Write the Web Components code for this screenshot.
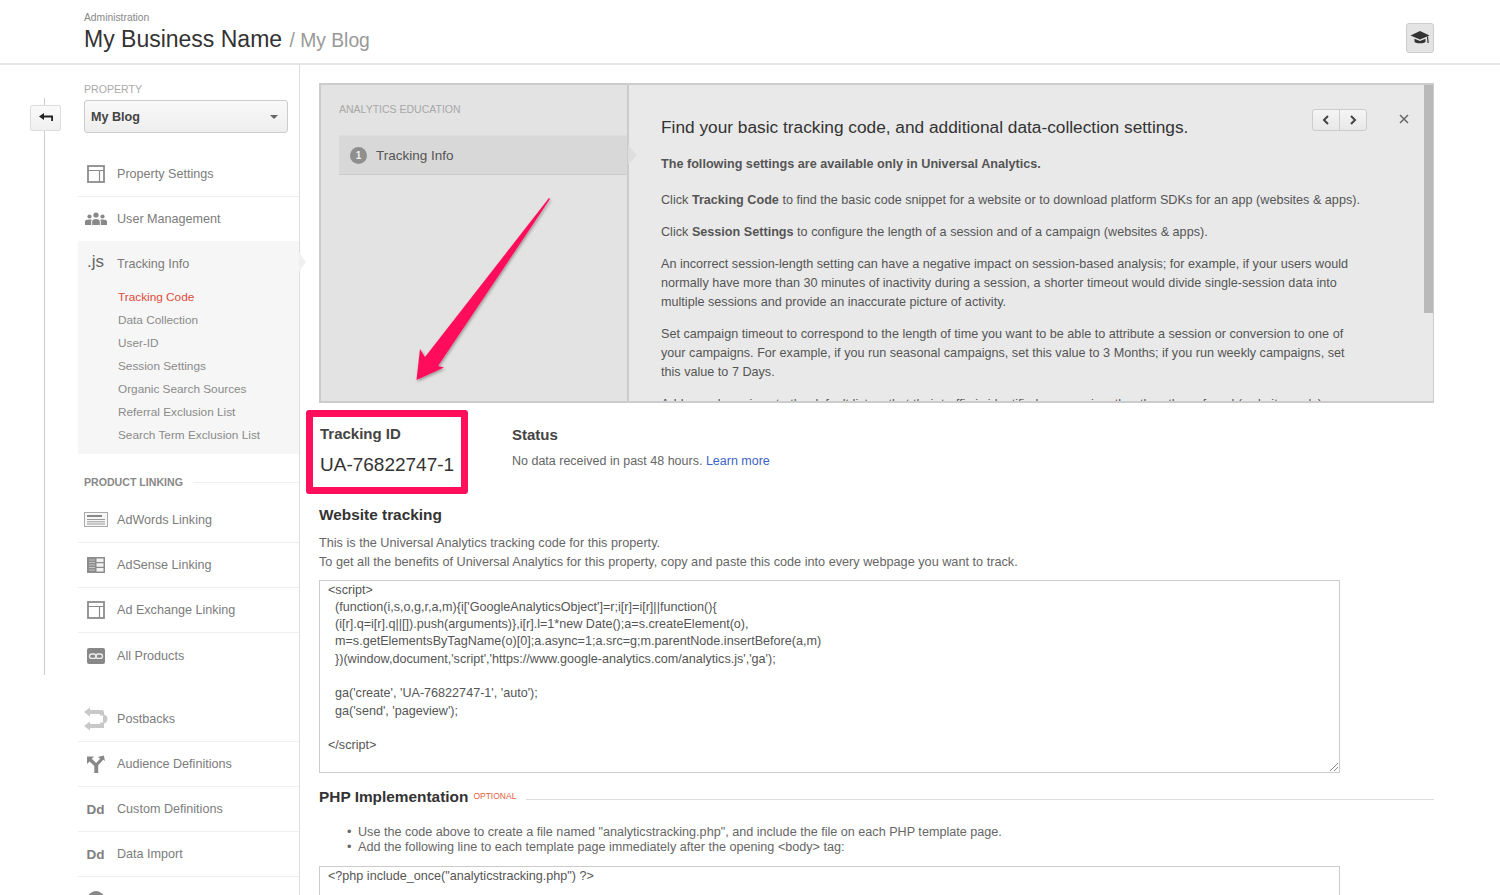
<!DOCTYPE html>
<html>
<head>
<meta charset="utf-8">
<title>Tracking Info</title>
<style>
    html, body { margin: 0; padding: 0; height: 895px; overflow: hidden; background: #fff; }
    body { font-family: "Liberation Sans", Arial, sans-serif; font-size: 12px; color: #555; }
</style>
</head>
<body>
<ga-page>
    <ga-header slot="header" crumb="Administration" account="My Business Name" view="/ My Blog"></ga-header>
    <ga-rail slot="rail"></ga-rail>
    <ga-sidebar slot="sidebar">
        <ga-nav-item icon="panel">Property Settings</ga-nav-item>
        <ga-nav-item icon="users" last style="height:44px">User Management</ga-nav-item>
        <ga-nav-group>
            <ga-nav-item icon="js" slot="head" last active>Tracking Info</ga-nav-item>
            <ga-sub-item current>Tracking Code</ga-sub-item>
            <ga-sub-item>Data Collection</ga-sub-item>
            <ga-sub-item>User-ID</ga-sub-item>
            <ga-sub-item>Session Settings</ga-sub-item>
            <ga-sub-item>Organic Search Sources</ga-sub-item>
            <ga-sub-item>Referral Exclusion List</ga-sub-item>
            <ga-sub-item>Search Term Exclusion List</ga-sub-item>
        </ga-nav-group>
        <ga-nav-label>PRODUCT LINKING</ga-nav-label>
        <ga-nav-item icon="adwords">AdWords Linking</ga-nav-item>
        <ga-nav-item icon="adsense">AdSense Linking</ga-nav-item>
        <ga-nav-item icon="panel">Ad Exchange Linking</ga-nav-item>
        <ga-nav-item icon="link" last>All Products</ga-nav-item>
        <div style="height:19px"></div>
        <ga-nav-item icon="postbacks">Postbacks</ga-nav-item>
        <ga-nav-item icon="fork">Audience Definitions</ga-nav-item>
        <ga-nav-item icon="dd">Custom Definitions</ga-nav-item>
        <ga-nav-item icon="dd">Data Import</ga-nav-item>
        <ga-nav-item icon="social" last>Social Settings</ga-nav-item>
    </ga-sidebar>
    <ga-edu-panel slot="main">
        <p class="first"><b>The following settings are available only in Universal Analytics.</b></p>
        <p>Click <b>Tracking Code</b> to find the basic code snippet for a website or to download platform SDKs for an app (websites &amp; apps).</p>
        <p>Click <b>Session Settings</b> to configure the length of a session and of a campaign (websites &amp; apps).</p>
        <p>An incorrect session-length setting can have a negative impact on session-based analysis; for example, if your users would<br>normally have more than 30 minutes of inactivity during a session, a shorter timeout would divide single-session data into<br>multiple sessions and provide an inaccurate picture of activity.</p>
        <p>Set campaign timeout to correspond to the length of time you want to be able to attribute a session or conversion to one of<br>your campaigns. For example, if you run seasonal campaigns, set this value to 3 Months; if you run weekly campaigns, set<br>this value to 7 Days.</p>
        <p>Add search engines to the default list so that their traffic is identified as organic rather than those found (websites only).</p>
    </ga-edu-panel>
    <ga-tracking-head slot="main" tracking-id="UA-76822747-1">
        No data received in past 48 hours. <a href="#">Learn more</a>
    </ga-tracking-head>
    <ga-section slot="main" heading="Website tracking">
        <div>This is the Universal Analytics tracking code for this property.</div>
        <div>To get all the benefits of Universal Analytics for this property, copy and paste this code into every webpage you want to track.</div>
        <ga-code-box height="193" gap="8" grip>&lt;script&gt;
  (function(i,s,o,g,r,a,m){i['GoogleAnalyticsObject']=r;i[r]=i[r]||function(){
  (i[r].q=i[r].q||[]).push(arguments)},i[r].l=1*new Date();a=s.createElement(o),
  m=s.getElementsByTagName(o)[0];a.async=1;a.src=g;m.parentNode.insertBefore(a,m)
  })(window,document,'script','https://www.google-analytics.com/analytics.js','ga');

  ga('create', 'UA-76822747-1', 'auto');
  ga('send', 'pageview');

&lt;/script&gt;</ga-code-box>
    </ga-section>
    <ga-php-section slot="main" heading="PHP Implementation" tag="OPTIONAL">
        <li>Use the code above to create a file named "analyticstracking.php", and include the file on each PHP template page.</li>
        <li>Add the following line to each template page immediately after the opening &lt;body&gt; tag:</li>
    </ga-php-section>
    <ga-code-box slot="main" height="60" gap="9">&lt;?php include_once("analyticstracking.php") ?&gt;</ga-code-box>
</ga-page>

<script>
const ICONS = {
    panel: `<svg width="24" height="20" viewBox="0 0 24 20"><rect x="4" y="2" width="16" height="16" fill="none" stroke="#8c8c8c" stroke-width="1.800"/><path d="M4 6.500h16M15.500 6.500V18" fill="none" stroke="#8c8c8c" stroke-width="1.200"/></svg>`,
    users: `<svg width="24" height="20" viewBox="0 0 24 20"><g fill="#888"><circle cx="12" cy="6" r="2.600"/><circle cx="5.500" cy="7.500" r="2.100"/><circle cx="18.500" cy="7.500" r="2.100"/><path d="M1 16v-3.400c0-1.300 1.200-2.200 4.500-2.200 1 0 1.800.1 2.400.4-.5.5-.7 1.100-.7 1.800V16zM23 16v-3.400c0-1.300-1.200-2.200-4.500-2.200-1 0-1.800.1-2.400.4.5.5.7 1.100.7 1.800V16zM8.200 16v-3.500c0-1.500 1.400-2.500 3.800-2.500s3.800 1 3.800 2.500V16z"/></g></svg>`,
    adwords: `<svg width="24" height="20" viewBox="0 0 24 20"><rect x=".500" y="2.500" width="23" height="14" fill="#f7f7f7" stroke="#aaa"/><path d="M3 6h15" stroke="#888" stroke-width="2"/><path d="M3 9.500h18M3 11.800h18M3 14h18" stroke="#999" stroke-width="1"/></svg>`,
    adsense: `<svg width="24" height="20" viewBox="0 0 24 20"><rect x="3" y="2" width="18" height="16" fill="#8c8c8c"/><path d="M5 5h6M5 7.500h6M5 10h6M5 12.500h6M5 15h6" stroke="#c4c4c4" stroke-width="1"/><path d="M12.500 3.500H19.500V7h-7zM12.500 8.300H19.500v3.500h-7zM12.500 13H19.500v3.500h-7z" fill="#f2f2f2"/></svg>`,
    link: `<svg width="24" height="20" viewBox="0 0 24 20"><rect x="3" y="2" width="18" height="16" rx="2" fill="#888"/><rect x="5.500" y="8" width="6.500" height="4.400" rx="2.200" fill="none" stroke="#eee" stroke-width="1.300"/><rect x="12" y="8" width="6.500" height="4.400" rx="2.200" fill="none" stroke="#eee" stroke-width="1.300"/></svg>`,
    postbacks: `<svg width="24" height="24" viewBox="0 0 24 24"><g fill="#c8c8c8"><path d="M0 5l6-4.500V3h12.500l1.500 1.500V7H6v2.500zM0 19l6-4.500V17h14v4H6v2.500z"/><path d="M19 7.500a4.500 4.500 0 0 1 0 9z"/><path d="M16 7h4v1.500h-4zM16 15.500h4V17h-4z"/></g></svg>`,
    fork: `<svg width="24" height="20" viewBox="0 0 24 20"><path d="M3 2.500h7L7.800 4.700l4.300 4.300 4-4.300L14 3l5.800-1.500L21 7l-1.800-1.300-5 5.600V19h-3.900v-6.900L5.600 7.400 3 10z" fill="#888"/></svg>`,
    social: `<svg width="24" height="20" viewBox="0 0 24 20"><circle cx="12" cy="10" r="9" fill="#888"/></svg>`
};

class GaPage extends HTMLElement {
    constructor() {
        super();
        this.attachShadow({ mode: 'open' });
        this.shadowRoot.innerHTML = `
            <style>
                :host { display: block; width: 1500px; height: 895px; overflow: hidden; position: relative; }
                .body { display: flex; height: 830px; }
                .main { width: 1115px; padding: 18px 0 0 19px; }
                .arrow { position: absolute; left: 0; top: 0; pointer-events: none; }
            </style>
            <slot name="header"></slot>
            <div class="body">
                <slot name="rail"></slot>
                <slot name="sidebar"></slot>
                <div class="main"><slot name="main"></slot></div>
            </div>
            <svg class="arrow" width="1500" height="895">
                <defs><filter id="sh" x="-20%" y="-20%" width="140%" height="140%"><feDropShadow dx="1" dy="1.500" stdDeviation="1.500" flood-color="#000" flood-opacity=".35"/></filter></defs>
                <polygon filter="url(#sh)" fill="#ff0f5c" points="549,198 550,199 438,366 444,367.500 416.500,380 420,349 425,357"/>
            </svg>`;
    }
}

class GaHeader extends HTMLElement {
    constructor() {
        super();
        this.attachShadow({ mode: 'open' });
        this.shadowRoot.innerHTML = `
            <style>
                :host { display: flex; justify-content: space-between; height: 63px; box-sizing: content-box; border-bottom: 2px solid #e6e6e6; padding-left: 84px; padding-right: 66px; }
                .crumb { font-size: 10.300px; color: #888; padding-top: 12px; line-height: 11px; }
                .title { line-height: 28px; margin-top: 2px; white-space: nowrap; }
                .account { font-size: 23px; color: #333; }
                .view { font-size: 19.300px; color: #999; margin-left: 4px; }
                .cap { width: 26px; height: 28px; margin-top: 23px; background: #e4e4e4; border: 1px solid #ccc; border-radius: 3px; display: flex; align-items: center; justify-content: center; }
            </style>
            <div>
                <div class="crumb"></div>
                <div class="title"><span class="account"></span> <span class="view"></span></div>
            </div>
            <div class="cap">
                <svg width="22" height="18" viewBox="0 0 22 18"><path d="M11 2L20.500 6.500l-9.500 4-9.500-4z" fill="#333"/><path d="M5.500 9.800v3c1.500 2 9.500 2 11 0v-3L11 12z" fill="#333"/><path d="M18.500 7.500l.6 6.500" stroke="#333" stroke-width="1.200"/></svg>
            </div>`;
        this.shadowRoot.querySelector('.crumb').textContent = this.getAttribute('crumb');
        this.shadowRoot.querySelector('.account').textContent = this.getAttribute('account');
        this.shadowRoot.querySelector('.view').textContent = this.getAttribute('view');
    }
}

class GaRail extends HTMLElement {
    constructor() {
        super();
        this.attachShadow({ mode: 'open' });
        this.shadowRoot.innerHTML = `
            <style>
                :host { display: flex; flex-direction: column; width: 78px; flex: none; padding-top: 33px; box-sizing: border-box; height: 610px; }
                .line { width: 1px; background: #ccc; margin-left: 44px; }
                .back { width: 29px; height: 24px; margin-left: 30px; border: 1px solid #ddd; border-radius: 2px; background: linear-gradient(#fafafa, #f0f0f0); display: flex; align-items: center; justify-content: center; box-sizing: content-box; }
            </style>
            <div class="line" style="height:7px"></div>
            <div class="back"><svg width="16" height="12" viewBox="0 0 16 12"><path d="M1 4.500L6 1v2.500h9V9h-1.800V5.500H6V8z" fill="#222"/></svg></div>
            <div class="line" style="flex:1"></div>`;
    }
}

class GaSidebar extends HTMLElement {
    constructor() {
        super();
        this.attachShadow({ mode: 'open' });
        this.shadowRoot.innerHTML = `
            <style>
                :host { display: block; width: 222px; flex: none; box-sizing: border-box; border-right: 1px solid #ddd; height: 830px; font-size: 12.600px; }
                .top { padding: 18px 0 19px 6px; }
                .label { font-size: 10.600px; color: #aaa; line-height: 13px; margin-bottom: 4px; }
                .select { width: 187px; height: 31px; border: 1px solid #ccc; border-radius: 3px; background: linear-gradient(#f9f9f9, #eee); display: flex; align-items: center; justify-content: space-between; padding: 0 9px 0 6px; box-sizing: content-box; font-weight: bold; font-size: 12.600px; color: #444; }
                .caret { width: 0; height: 0; border: 4px solid transparent; border-top: 4px solid #666; border-bottom: 0; }
            </style>
            <div class="top">
                <div class="label">PROPERTY</div>
                <div class="select">My Blog<span class="caret"></span></div>
            </div>
            <slot></slot>`;
    }
}

class GaNavItem extends HTMLElement {
    constructor() {
        super();
        this.attachShadow({ mode: 'open' });
        const name = this.getAttribute('icon');
        let icon = ICONS[name];
        if (name === 'js') icon = '<span class="js">.js</span>';
        if (name === 'dd') icon = '<span class="dd">Dd</span>';
        const last = this.hasAttribute('last');
        this.shadowRoot.innerHTML = `
            <style>
                :host { display: flex; align-items: center; height: 45px; box-sizing: border-box; color: #7c7c7c; ${last ? '' : 'border-bottom: 1px solid #eee;'} }
                .ic { width: 39px; flex: none; display: flex; justify-content: center; padding-right: 4px; box-sizing: border-box; }
                svg { display: block; }
                .js { font-size: 17px; color: #666; margin-top: -3px; }
                .dd { font-size: 13.500px; font-weight: bold; color: #808080; }
                .txt { white-space: nowrap; }
            </style>
            <span class="ic">${icon}</span><span class="txt"><slot></slot></span>`;
    }
}

class GaNavGroup extends HTMLElement {
    constructor() {
        super();
        this.attachShadow({ mode: 'open' });
        this.shadowRoot.innerHTML = `
            <style>
                :host { display: block; position: relative; background: #f6f6f6; height: 213px; }
                .notch { position: absolute; right: -7px; top: 11px; width: 0; height: 0; border: 10px solid transparent; border-left: 7px solid #f0f0f0; border-right: 0; }
            </style>
            <slot name="head"></slot>
            <div><slot></slot></div>
            <div class="notch"></div>`;
    }
}

class GaSubItem extends HTMLElement {
    constructor() {
        super();
        this.attachShadow({ mode: 'open' });
        const current = this.hasAttribute('current');
        this.shadowRoot.innerHTML = `
            <style>
                :host { display: block; height: 23px; line-height: 23px; padding-left: 40px; font-size: 11.800px; color: ${current ? '#dd4b39' : '#8a8a8a'}; white-space: nowrap; }
            </style>
            <slot></slot>`;
    }
}

class GaNavLabel extends HTMLElement {
    constructor() {
        super();
        this.attachShadow({ mode: 'open' });
        this.shadowRoot.innerHTML = `
            <style>
                :host { display: flex; align-items: center; height: 44px; padding: 12px 0 0 6px; box-sizing: border-box; font-size: 10.600px; font-weight: bold; color: #888; white-space: nowrap; }
                i { flex: 1; height: 1px; background: #eee; margin-left: 10px; }
            </style>
            <slot></slot><i></i>`;
    }
}

class GaEduPanel extends HTMLElement {
    constructor() {
        super();
        this.attachShadow({ mode: 'open' });
        this.shadowRoot.innerHTML = `
            <style>
                :host { display: flex; position: relative; height: 320px; box-sizing: border-box; border: 2px solid #ccc; border-right-width: 1px; background: #e9e9e9; overflow: hidden; font-size: 12.630px; color: #555; }
                .left { width: 308px; flex: none; box-sizing: border-box; background: #e3e3e3; border-right: 2px solid #ccc; padding: 18px 0 0 18px; }
                .left h4 { margin: 0; font-size: 10.500px; font-weight: normal; color: #a8a8a8; line-height: 13px; }
                .step { position: relative; margin-top: 19px; height: 40px; background: #d8d8d8; border-top: 1px solid #ddd; border-bottom: 1px solid #ccc; box-sizing: border-box; display: flex; align-items: center; color: #555; font-size: 13.500px; }
                .num { width: 17px; height: 17px; border-radius: 50%; background: #8f8f8f; color: #eee; font-size: 10px; font-weight: bold; text-align: center; line-height: 17px; margin: 0 9px 0 11px; }
                .right { flex: 1; padding: 32px 0 0 32px; position: relative; min-width: 0; }
                .notch { position: absolute; left: 307px; top: 60px; width: 0; height: 0; border: 10px solid transparent; border-left: 9px solid #dedede; border-right: 0; }
                h3 { margin: 0 0 18px; font-size: 17.300px; font-weight: normal; color: #333; line-height: 20px; white-space: nowrap; }
                ::slotted(p) { margin: 0 0 13px; line-height: 19px; white-space: nowrap; }
                ::slotted(p.first) { margin-bottom: 17px; }
                .pager { position: absolute; right: 57px; top: 24px; display: flex; border: 1px solid #ccc; border-radius: 3px; background: linear-gradient(#f5f5f5, #e8e8e8); height: 20px; }
                .pager span { width: 26px; display: flex; align-items: center; justify-content: center; }
                .pager span + span { border-left: 1px solid #ccc; }
                .close { position: absolute; right: 15px; top: 29px; display: block; }
                .bar { width: 9px; flex: none; position: relative; margin-right: 0; }
                .thumb { height: 228px; background: #b9b9b9; }
            </style>
            <div class="left">
                <h4>ANALYTICS EDUCATION</h4>
                <div class="step"><span class="num">1</span>Tracking Info</div>
            </div>
            <div class="notch"></div>
            <div class="right">
                <h3>Find your basic tracking code, and additional data-collection settings.</h3>
                <slot></slot>
                <div class="pager">
                    <span><svg width="8" height="10" viewBox="0 0 8 10"><path d="M6 1L2 5l4 4" fill="none" stroke="#444" stroke-width="2"/></svg></span>
                    <span><svg width="8" height="10" viewBox="0 0 8 10"><path d="M2 1l4 4-4 4" fill="none" stroke="#444" stroke-width="2"/></svg></span>
                </div>
                <svg class="close" width="10" height="10" viewBox="0 0 10 10"><path d="M1 1l8 8M9 1L1 9" stroke="#666" stroke-width="1.500"/></svg>
            </div>
            <div class="bar"><div class="thumb"></div></div>`;
    }
}

class GaTrackingHead extends HTMLElement {
    constructor() {
        super();
        this.attachShadow({ mode: 'open' });
        this.shadowRoot.innerHTML = `
            <style>
                :host { display: flex; margin: 7px 0 0 -13px; height: 84px; }
                .box { width: 162px; height: 84px; box-sizing: border-box; border: 7px solid #ff0f5c; border-radius: 3px; padding: 7px 0 0 7px; white-space: nowrap; }
                .label { font-size: 15px; font-weight: bold; color: #444; line-height: 20px; }
                .id { font-size: 19px; color: #333; line-height: 24px; margin-top: 9px; }
                .status { margin-left: 44px; padding-top: 15px; }
                .msg { font-size: 12.500px; color: #666; margin-top: 8px; line-height: 16px; }
                ::slotted(a) { color: #3d64c8; text-decoration: none; }
            </style>
            <div class="box">
                <div class="label">Tracking ID</div>
                <div class="id"></div>
            </div>
            <div class="status">
                <div class="label">Status</div>
                <div class="msg"><slot></slot></div>
            </div>`;
        this.shadowRoot.querySelector('.id').textContent = this.getAttribute('tracking-id');
    }
}

class GaSection extends HTMLElement {
    constructor() {
        super();
        this.attachShadow({ mode: 'open' });
        this.shadowRoot.innerHTML = `
            <style>
                :host { display: block; font-size: 12.700px; color: #666; line-height: 19px; }
                h2 { margin: 11px 0 9px; font-size: 15.400px; font-weight: bold; color: #333; line-height: 20px; }
            </style>
            <h2></h2>
            <slot></slot>`;
        this.shadowRoot.querySelector('h2').textContent = this.getAttribute('heading');
    }
}

class GaPhpSection extends HTMLElement {
    constructor() {
        super();
        this.attachShadow({ mode: 'open' });
        this.shadowRoot.innerHTML = `
            <style>
                :host { display: block; font-size: 12.620px; color: #666; }
                .head { display: flex; align-items: center; margin-top: 14px; height: 20px; white-space: nowrap; }
                h2 { margin: 0; font-size: 15.400px; font-weight: bold; color: #333; line-height: 20px; }
                .tag { font-size: 8.500px; color: #e0603c; margin: -3px 10px 0 5px; }
                i { flex: 1; height: 1px; background: #ddd; margin-top: 5px; }
                ul { margin: 18px 0 11px; padding-left: 39px; line-height: 15px; }
                ::slotted(li) { list-style: none; }
                ::slotted(li)::before { content: "\\2022"; display: inline-block; width: 11px; margin-left: -11px; }
            </style>
            <div class="head"><h2></h2><span class="tag"></span><i></i></div>
            <ul><slot></slot></ul>`;
        this.shadowRoot.querySelector('h2').textContent = this.getAttribute('heading');
        this.shadowRoot.querySelector('.tag').textContent = this.getAttribute('tag');
    }
}

class GaCodeBox extends HTMLElement {
    constructor() {
        super();
        this.attachShadow({ mode: 'open' });
        const grip = this.hasAttribute('grip') ? `<svg class="grip" width="10" height="10" viewBox="0 0 10 10"><path d="M9 1L1 9M9 5L5 9" stroke="#888" stroke-width="1"/></svg>` : '';
        this.shadowRoot.innerHTML = `
            <style>
                :host { display: block; position: relative; width: 1021px; height: ${this.getAttribute('height')}px; box-sizing: border-box; border: 1px solid #ccc; margin-top: ${this.getAttribute('gap')}px; padding: .6px 8px 0; font-size: 12.600px; line-height: 17.300px; color: #555; overflow: hidden; }
                .code { white-space: pre; }
                .grip { position: absolute; right: 0; bottom: 0; }
            </style>
            <div class="code"><slot></slot></div>${grip}`;
    }
}

customElements.define('ga-page', GaPage);
customElements.define('ga-header', GaHeader);
customElements.define('ga-rail', GaRail);
customElements.define('ga-sidebar', GaSidebar);
customElements.define('ga-nav-item', GaNavItem);
customElements.define('ga-nav-group', GaNavGroup);
customElements.define('ga-sub-item', GaSubItem);
customElements.define('ga-nav-label', GaNavLabel);
customElements.define('ga-edu-panel', GaEduPanel);
customElements.define('ga-tracking-head', GaTrackingHead);
customElements.define('ga-section', GaSection);
customElements.define('ga-php-section', GaPhpSection);
customElements.define('ga-code-box', GaCodeBox);
</script>
</body>
</html>
